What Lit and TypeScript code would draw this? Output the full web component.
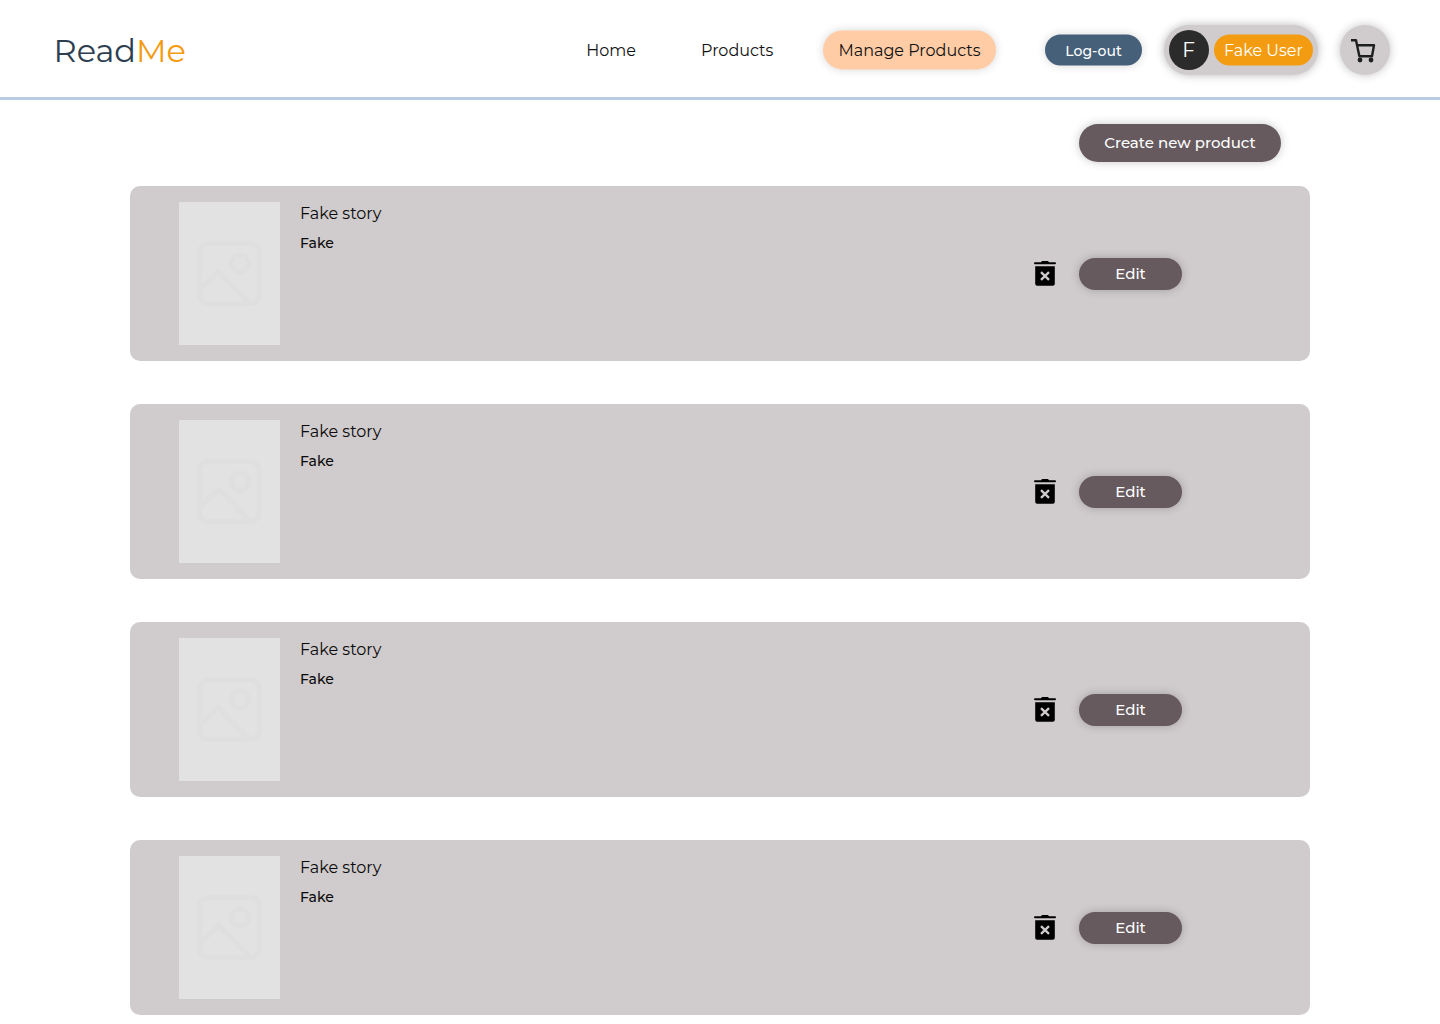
import { LitElement, html, css } from "lit";
import { customElement, property, state } from "lit/decorators.js";

interface Product {
  title: string;
  author: string;
}

@customElement("site-header")
class SiteHeader extends LitElement {
  static styles = css`
    :host {
      display: flex;
      align-items: center;
      box-sizing: border-box;
      height: 100px;
      padding: 3px 50px 0 53.5px;
      border-bottom: 3px solid #b9cde5;
      white-space: nowrap;
    }
    .logo {
      color: #2c3e50;
      font-size: 32px;
      line-height: 40px;
      padding-top: 1px;
    }
    .accent {
      color: #f39c12;
    }
    nav {
      display: flex;
      align-items: center;
      margin-left: auto;
      color: #111;
      line-height: 20px;
    }
    .link {
      margin-right: 65px;
      padding-top: 2px;
    }
    .link.last {
      margin-right: 49.6px;
    }
    .pill {
      display: flex;
      align-items: center;
      justify-content: center;
      box-sizing: border-box;
      box-shadow: 0 0 10px rgba(0, 0, 0, 0.16);
    }
    .current {
      width: 173px;
      height: 39px;
      border-radius: 20px;
      background: #ffcca6;
      margin: 0 49px 1px 0;
      padding-top: 1px;
      transform: translateY(0.5px);
    }
    .logout {
      width: 97px;
      height: 31px;
      border-radius: 16px;
      background: #46607a;
      color: #fff;
      margin: 0 22px 1px 0;
      font-size: 14px;
      font-weight: 500;
      padding-top: 1px;
      transform: translateY(0.5px);
    }
    .user {
      width: 154px;
      height: 50px;
      border-radius: 25px;
      background: #d0cbcd;
      gap: 5px;
      margin-right: 22px;
      box-shadow: 0 0 10px rgba(0, 0, 0, 0.28);
    }
    .avatar,
    .name {
      display: flex;
      align-items: center;
      justify-content: center;
      box-sizing: border-box;
      color: #fff;
    }
    .avatar {
      width: 40px;
      height: 40px;
      padding-right: 1px;
      border-radius: 50%;
      background: #2b2b2b;
      font-size: 20px;
    }
    .name {
      width: 99px;
      height: 31px;
      margin-bottom: 1px;
      padding-top: 1px;
      border-radius: 16px;
      background: #f39c12;
      line-height: 20px;
      transform: translateY(0.5px);
    }
    .cart {
      width: 50px;
      height: 50px;
      border-radius: 50%;
      background: #d0cbcd;
      box-shadow: 0 0 10px rgba(0, 0, 0, 0.24);
    }
    .cart svg {
      display: block;
    }
  `;

  render() {
    return html`
      <div class="logo">Read<span class="accent">Me</span></div>
      <nav>
        <span class="link">Home</span>
        <span class="link last">Products</span>
        <div class="pill current">Manage Products</div>
      </nav>
      <div class="pill logout">Log-out</div>
      <div class="pill user">
        <div class="avatar">F</div>
        <div class="name">Fake User</div>
      </div>
      <div class="pill cart">
        <svg width="50" height="50" viewBox="0 0 50 50" fill="none" stroke="#1e2020" stroke-width="2.4">
          <path d="M11 15.2h5l3.4 16H32L34 20.2H17" stroke-linejoin="round" />
          <circle cx="20" cy="35" r="2.4" fill="#1e2020" stroke="none" />
          <circle cx="31" cy="35" r="2.4" fill="#1e2020" stroke="none" />
        </svg>
      </div>
    `;
  }
}

@customElement("product-card")
class ProductCard extends LitElement {
  @property({ attribute: false }) product: Product = { title: "", author: "" };

  static styles = css`
    :host {
      display: flex;
      box-sizing: border-box;
      height: 175px;
      padding: 16px 128px 16px 49px;
      border-radius: 10px;
      background: #d0cbcc;
      color: #0a0a0a;
    }
    .cover {
      width: 101px;
      height: 143px;
      background: #e2e2e2;
      margin-right: 20px;
      flex: none;
    }
    .cover svg,
    .trash {
      display: block;
    }
    .info {
      display: flex;
      flex-direction: column;
      gap: 11px;
      padding-top: 2px;
      line-height: 20px;
    }
    .author {
      font-size: 14px;
      font-weight: 500;
      line-height: 17px;
    }
    .actions {
      display: flex;
      align-items: center;
      gap: 23px;
      margin-left: auto;
    }
    .edit {
      display: flex;
      align-items: center;
      justify-content: center;
      width: 103px;
      height: 32px;
      border-radius: 16px;
      background: #665a5e;
      color: #fff;
      font-size: 15px;
      font-weight: 500;
      box-shadow: 0 0 10px rgba(0, 0, 0, 0.22);
    }
  `;

  render() {
    return html`
      <div class="cover">
        <svg width="101" height="143" viewBox="0 0 101 143" fill="none" stroke="#dfdfdf" stroke-width="5">
          <rect x="20.3" y="41.5" width="60" height="60" rx="9" />
          <circle cx="61" cy="61.5" r="8.5" />
          <path d="M21 87 39.5 69.5 71 101.5" />
        </svg>
      </div>
      <div class="info">
        <div>${this.product.title}</div>
        <div class="author">${this.product.author}</div>
      </div>
      <div class="actions">
        <svg class="trash" width="22" height="26" viewBox="0 0 22 26">
          <path d="M1 1.2h6L8 0h6l1 1.2h6q1 0 1 1t-1 1H1q-1 0-1-1t1-1z" />
          <path d="M1.2 5.2h19.6v17.6q0 2-2 2H3.2q-2 0-2-2z" />
          <path d="m7 11.2 8 7.6m0-7.6-8 7.6" fill="none" stroke="#d0cbcc" stroke-width="2.3" />
        </svg>
        <div class="edit">Edit</div>
      </div>
    `;
  }
}

@customElement("app-root")
class AppRoot extends LitElement {
  @state() private products: Product[] = Array.from({ length: 4 }, () => ({
    title: "Fake story",
    author: "Fake",
  }));

  static styles = css`
    :host {
      display: block;
      height: 1024px;
      overflow: hidden;
      background: #fff;
      font-family: Montserrat, Lato, "Open Sans", sans-serif;
      font-size: 16px;
    }
    main {
      display: flex;
      flex-direction: column;
      width: 1180px;
      margin: 0 auto;
      padding-top: 24px;
    }
    .create {
      display: flex;
      align-items: center;
      justify-content: center;
      align-self: flex-end;
      box-sizing: border-box;
      width: 202px;
      height: 38px;
      padding-bottom: 2px;
      margin: 0 29px 24px 0;
      border-radius: 19px;
      background: #665a5e;
      color: #fff;
      font-size: 15px;
      font-weight: 500;
      box-shadow: 0 0 10px rgba(0, 0, 0, 0.22);
    }
    .list {
      display: flex;
      flex-direction: column;
      gap: 43px;
    }
  `;

  render() {
    return html`
      <site-header></site-header>
      <main>
        <div class="create">Create new product</div>
        <div class="list">
          ${this.products.map((p) => html`<product-card .product=${p}></product-card>`)}
        </div>
      </main>
    `;
  }
}
